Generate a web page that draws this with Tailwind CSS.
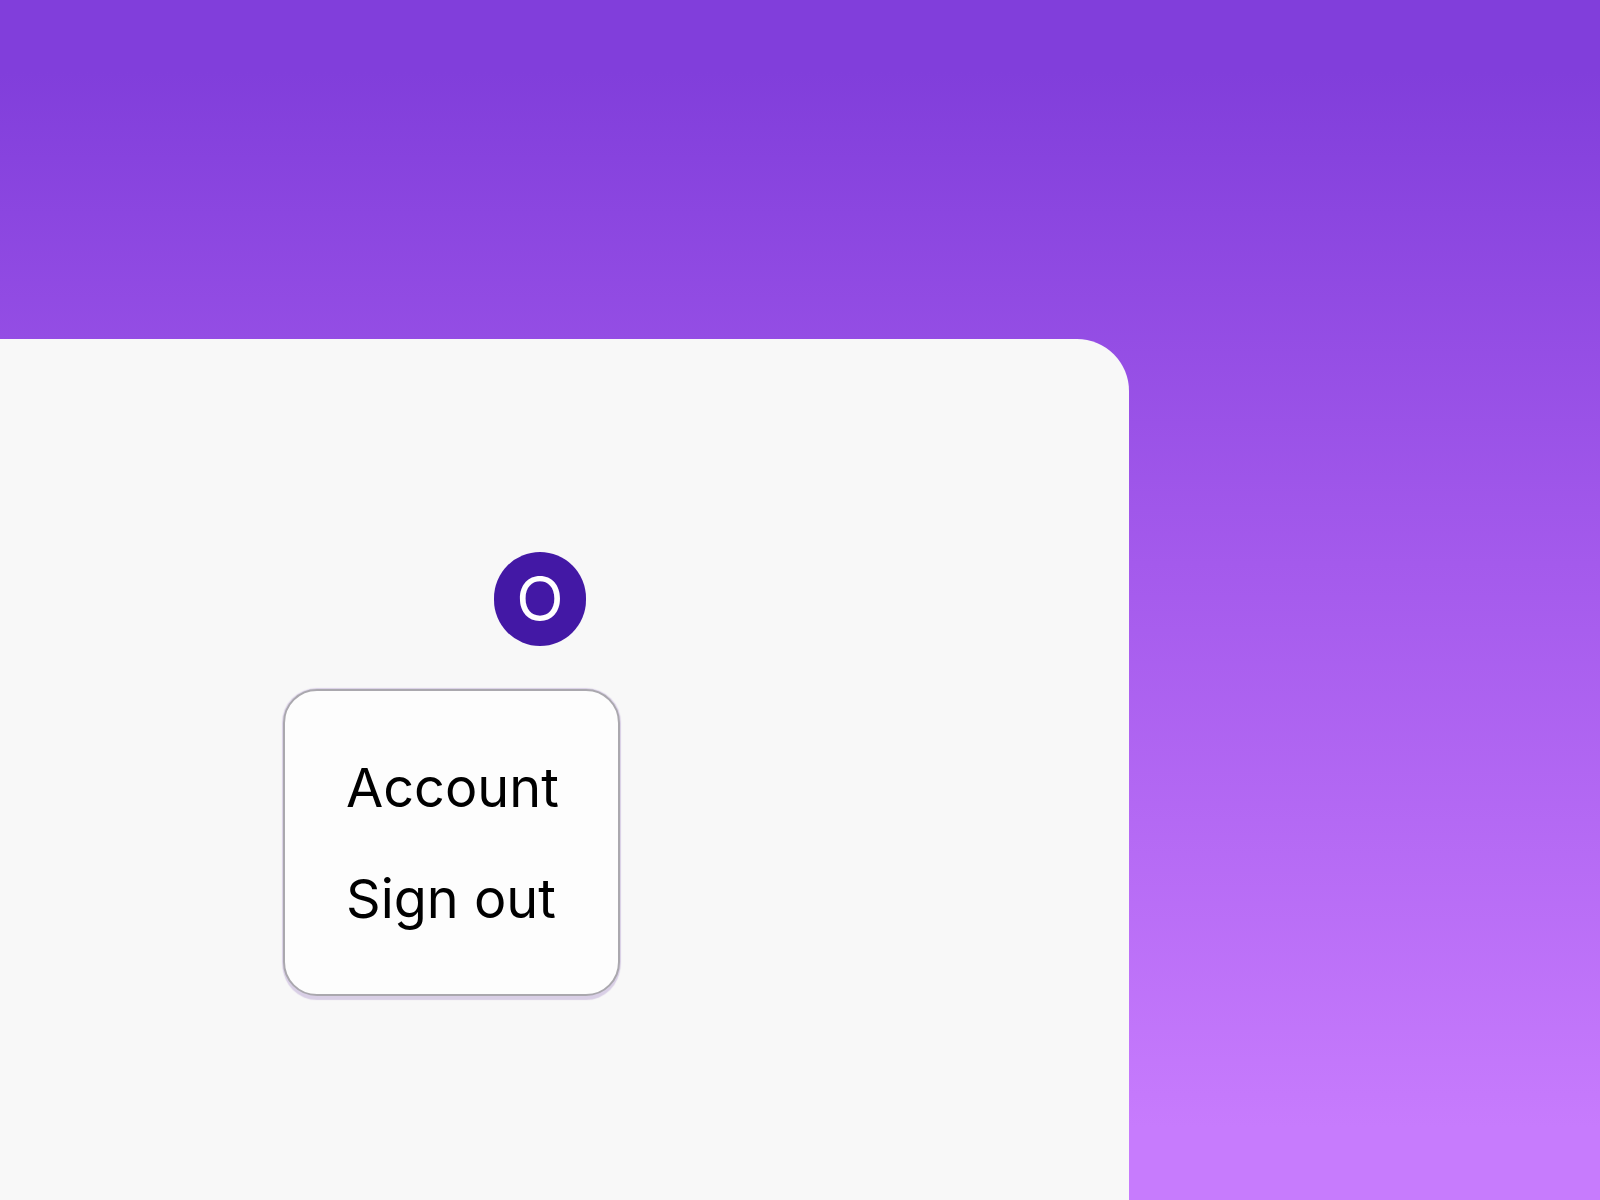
<!DOCTYPE html>
<html lang="en">
<head>
  <meta charset="UTF-8" />
  <meta name="viewport" content="width=device-width, initial-scale=1.0"/>
  <title>Account Menu</title>
  <script src="https://cdn.jsdelivr.net/npm/@tailwindcss/browser@4"></script>
</head>
<body class="min-h-screen flex flex-col overflow-hidden bg-linear-to-b/srgb from-[#813edb] from-6% via-[#a45aec] via-47% to-[#c77bfd] to-94% pt-[339px] font-['Inter',sans-serif] text-black">

  <main class="grow flex flex-col items-end w-[calc(100%-471px)] rounded-tr-[52px] bg-[#f8f8f8] pt-[213px] pr-[509px]">
    <button type="button" aria-label="Open account menu" aria-expanded="true" class="mr-[34px] w-[92px] h-[94px] flex items-center justify-center rounded-full bg-[#4318a5] text-[62px] leading-none text-white">O</button>

    <nav aria-label="Account" class="mt-[43px] w-[337px] flex flex-col gap-[31px] rounded-[34px] border-2 border-[#aaa8ae] bg-[#fdfdfd] px-[61px] pt-[57px] pb-[55px] shadow-[0_0_1px_1px_#d9cfe6,0_4px_1px_#d9cfe6] text-[54px] leading-[80px]">
      <a href="#account" class="whitespace-nowrap">Account</a>
      <a href="#sign-out" class="whitespace-nowrap">Sign out</a>
    </nav>
  </main>

</body>
</html>
